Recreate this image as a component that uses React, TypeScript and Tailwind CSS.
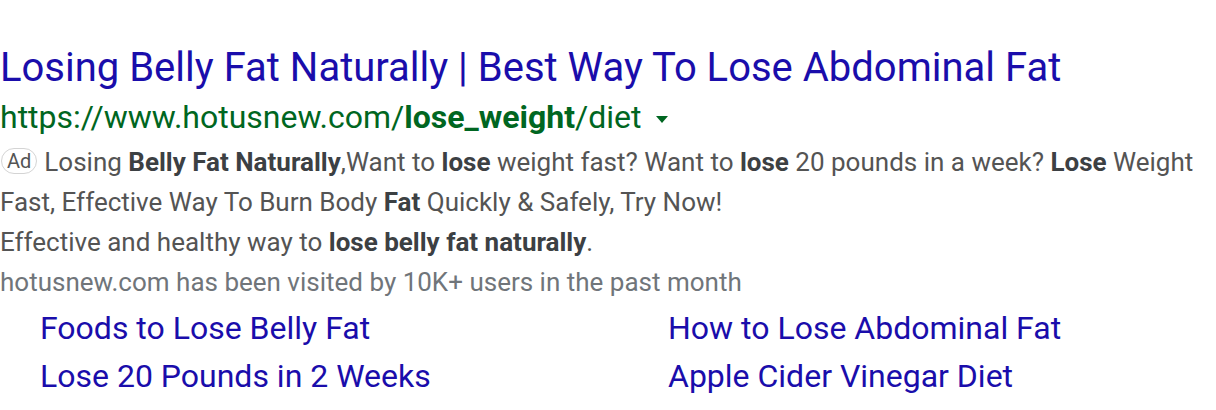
const sitelinks = [
  ["Foods to Lose Belly Fat", "How to Lose Abdominal Fat"],
  ["Lose 20 Pounds in 2 Weeks", "Apple Cider Vinegar Diet"],
];

export default function App() {
  return (
    <div className="h-[410px] w-[1216px] overflow-hidden bg-white pt-[44px] font-['Roboto',sans-serif]">
      <a href="#" className="block whitespace-nowrap text-[40px] leading-[48px] text-[#1a0dab]">
        Losing Belly Fat Naturally | Best Way To Lose Abdominal Fat
      </a>
      <div className="mt-[5px] flex items-center whitespace-nowrap text-[32px] leading-[40px] text-[#006621]">
        <span>
          https://www.hotusnew.com/<b className="font-bold">lose_weight</b>/diet
        </span>
        <svg className="ml-[14px] mt-[4px]" width="12" height="7" viewBox="0 0 12 7">
          <path d="M0 0h12L6 7z" fill="#006621" />
        </svg>
      </div>
      <div className="mt-[5px] text-[26px] leading-[40px] text-[#545454]">
        <p>
          <span className="ml-[1px] mr-[7px] inline-block rounded-full border border-[#d4d4d4] px-[5px] align-[3px] text-[20px] leading-[24px] text-[#545454]">
            Ad
          </span>
          Losing <b className="text-[#3c4043]">Belly Fat Naturally</b>,Want to <b className="text-[#3c4043]">lose</b> weight fast? Want to{" "}
          <b className="text-[#3c4043]">lose</b> 20 pounds in a week? <b className="text-[#3c4043]">Lose</b> Weight Fast, Effective Way To
          Burn Body <b className="text-[#3c4043]">Fat</b> Quickly &amp; Safely, Try Now!
        </p>
        <p>
          Effective and healthy way to <b className="text-[#3c4043]">lose belly fat naturally</b>.
        </p>
        <p className="text-[#70757a]">hotusnew.com has been visited by 10K+ users in the past month</p>
      </div>
      <div className="grid grid-cols-[628px_1fr] pl-[40px] pt-[2px] text-[32px] leading-[48px] text-[#1a0dab]">
        {sitelinks.flat().map((s) => (
          <a key={s} href="#" className="whitespace-nowrap">
            {s}
          </a>
        ))}
      </div>
    </div>
  );
}
